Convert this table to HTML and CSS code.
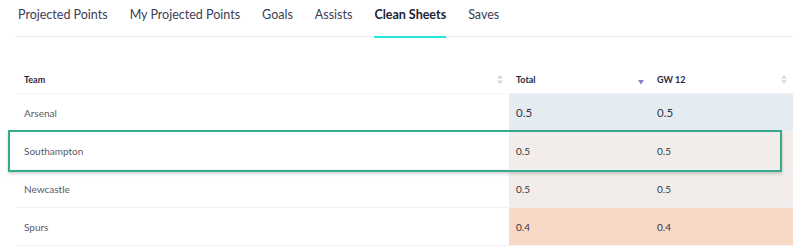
FILE: index.html
```html
<!DOCTYPE html>
<html>
<head>
<meta charset="utf-8">
<link rel="stylesheet" href="styles.css">
</head>
<body>
<div class="page">
  <nav class="tabs">
    <a class="tab">Projected Points</a>
    <a class="tab">My Projected Points</a>
    <a class="tab">Goals</a>
    <a class="tab">Assists</a>
    <a class="tab active">Clean Sheets</a>
    <a class="tab">Saves</a>
  </nav>
  <div class="grid">
    <div class="row head">
      <div class="hcell">Team
        <svg class="sort" width="6" height="9" viewBox="0 0 6 9"><path d="M3 0L6 3.5H0Z M3 9L6 5.5H0Z" fill="#d6d6dc"/></svg>
      </div>
      <div class="hcell">Total
        <svg class="sort down" width="6" height="5" viewBox="0 0 6 5"><path d="M0 0H6L3 4.5Z" fill="#7d7fd8"/></svg>
      </div>
      <div class="hcell">GW 12
        <svg class="sort" width="6" height="9" viewBox="0 0 6 9"><path d="M3 0L6 3.5H0Z M3 9L6 5.5H0Z" fill="#d6d6dc"/></svg>
      </div>
    </div>
    <div class="row">
      <div class="team">Arsenal</div>
      <div class="val big c-blue">0.5</div>
      <div class="val big c-blue">0.5</div>
    </div>
    <div class="row selected">
      <div class="team">Southampton</div>
      <div class="val c-grey">0.5</div>
      <div class="val c-grey">0.5</div>
      <div class="highlight"></div>
    </div>
    <div class="row">
      <div class="team">Newcastle</div>
      <div class="val c-grey">0.5</div>
      <div class="val c-grey">0.5</div>
    </div>
    <div class="row">
      <div class="team">Spurs</div>
      <div class="val c-peach">0.4</div>
      <div class="val c-peach">0.4</div>
    </div>
  </div>
</div>
</body>
</html>
```
FILE: styles.css
```css
* { box-sizing: border-box; }
html, body { margin: 0; padding: 0; background: #fff; }
body { font-family: Lato, "Noto Sans", sans-serif; color: #37374a; }

.page { width: 800px; height: 247px; overflow: hidden; }

.tabs {
  display: flex;
  gap: 22px;
  margin-left: 15px;
  width: 778px;
  height: 37px;
  padding-left: 3px;
  border-bottom: 1px solid #ececef;
}
.tab {
  position: relative;
  font-size: 12.5px;
  line-height: 29px;
  color: #3c3c55;
  white-space: nowrap;
}
.tab.active { font-weight: 700; color: #1e1e32; }
.tab.active::after {
  content: "";
  position: absolute;
  left: 0; right: 0; bottom: -2px;
  height: 2px;
  background: #22e4e0;
}

.grid { margin: 29px 0 0 16px; width: 777px; }
.row {
  display: grid;
  grid-template-columns: 493px 141px 143px;
  height: 38px;
  border-bottom: 1px solid #f1f1f3;
}
.row.head { height: 28px; border-bottom: 1px solid #f6f6f8; }
.row.selected { position: relative; z-index: 1; }

.hcell {
  display: flex;
  align-items: center;
  justify-content: space-between;
  padding: 0 6px 0 7px;
  font-size: 9px;
  font-weight: 700;
  color: #2a2a3c;
}
.hcell:first-child { padding-left: 8px; }
.sort.down { margin-top: 5px; }

.team {
  display: flex;
  align-items: center;
  padding-left: 8px;
  font-size: 10px;
  color: #5a5a66;
}
.val {
  display: flex;
  align-items: center;
  padding-left: 7px;
  font-size: 10px;
  color: #333340;
}
.val.big { font-size: 11.5px; }
.c-blue { background: #e4ecf2; }
.c-grey { background: #f2edeb; }
.c-peach { background: #fad8c6; }

.highlight {
  position: absolute;
  z-index: 2;
  left: -8px;
  top: -2px;
  width: 774px;
  height: 42px;
  border: 2px solid #34a98b;
  box-shadow: 0 2px 3px rgba(0, 0, 0, 0.18);
  pointer-events: none;
}
```
